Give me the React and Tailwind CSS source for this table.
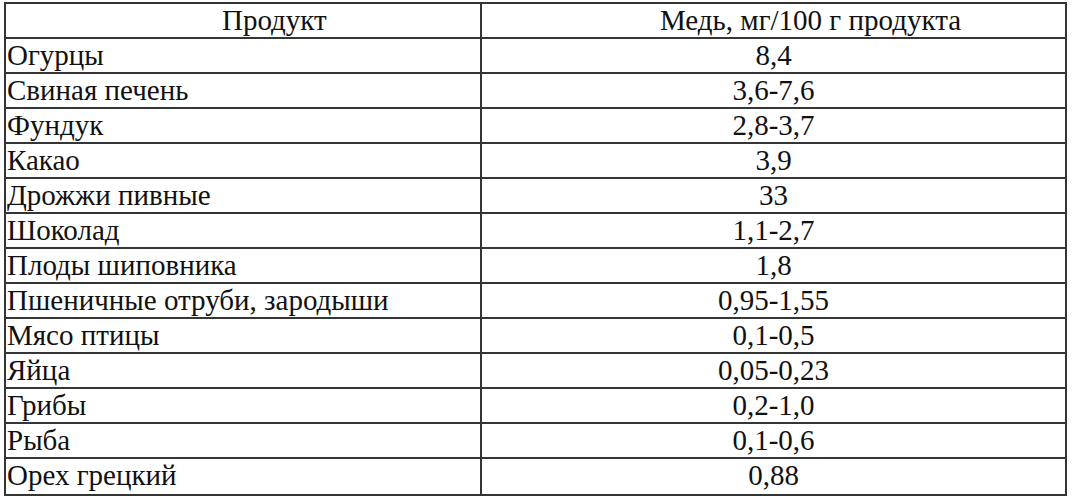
export default function App() {
  const rows = [
    ["Огурцы", "8,4"],
    ["Свиная печень", "3,6-7,6"],
    ["Фундук", "2,8-3,7"],
    ["Какао", "3,9"],
    ["Дрожжи пивные", "33"],
    ["Шоколад", "1,1-2,7"],
    ["Плоды шиповника", "1,8"],
    ["Пшеничные отруби, зародыши", "0,95-1,55"],
    ["Мясо птицы", "0,1-0,5"],
    ["Яйца", "0,05-0,23"],
    ["Грибы", "0,2-1,0"],
    ["Рыба", "0,1-0,6"],
    ["Орех грецкий", "0,88"],
  ];
  return (
    <div className="w-[1072px] h-[498px] bg-white pt-[2px] pl-[4px] font-['Liberation_Serif','Times_New_Roman',serif]">
      <div className="w-[1063px] border-2 border-[#353535] text-[29px] text-[#111]">
        <div className="grid grid-cols-[476px_1fr] h-[35px] border-b-2 border-[#353535]">
          <div className="border-r-2 border-[#353535] pl-[216px] leading-[32px] whitespace-nowrap">Продукт</div>
          <div className="text-center pl-[74px] leading-[32px] whitespace-nowrap">Медь, мг/100 г продукта</div>
        </div>
        {rows.map(([a, b], i) => (
          <div key={i} className={"grid grid-cols-[476px_1fr] h-[35px] " + (i < rows.length - 1 ? "border-b-2 border-[#353535]" : "")}>
            <div className="border-r-2 border-[#353535] pl-[1px] leading-[33px] whitespace-nowrap">{a}</div>
            <div className="text-center leading-[33px] whitespace-nowrap">{b}</div>
          </div>
        ))}
      </div>
    </div>
  );
}
